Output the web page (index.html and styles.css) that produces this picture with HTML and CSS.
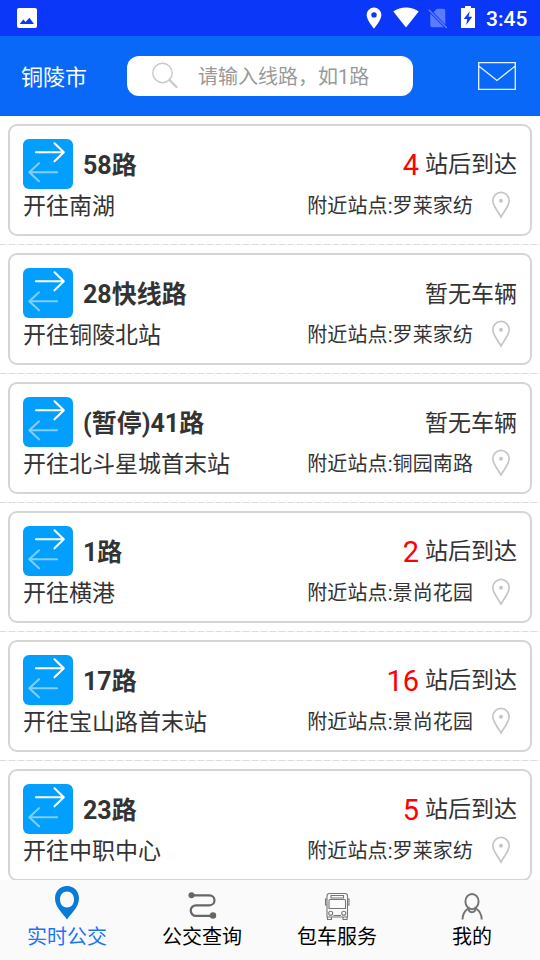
FILE: index.html
```html
<!DOCTYPE html>
<html lang="zh-CN">
<head>
<meta charset="utf-8">
<title>实时公交</title>
<link rel="stylesheet" href="styles.css">
</head>
<body>
<svg width="0" height="0" class="defs">
  <symbol id="swap" viewBox="0 0 50 50">
    <g fill="none" stroke-width="2.1" stroke-linecap="round" stroke-linejoin="round">
      <path stroke="#fff" d="M13 13.3H40.5M31.5 4.3L40.8 13.3L31.5 22.3"/>
      <path stroke="#80cfff" d="M34 33.3H6.5M16 24.3L6.3 33.3L16 42.3"/>
    </g>
  </symbol>
  <symbol id="pin" viewBox="0 0 20 28">
    <path fill="none" stroke="#c6c6c6" stroke-width="1.7" d="M10 26C7 20.5 1.8 15 1.8 9.6A8.2 8.2 0 0 1 18.2 9.6C18.2 15 13 20.5 10 26Z"/>
    <circle cx="10" cy="9.8" r="2" fill="#c6c6c6"/>
  </symbol>
</svg>
<div class="app">
  <div class="status">
    <svg width="20" height="20" viewBox="0 0 20 20"><rect width="20" height="20" rx="2" fill="#fff"/><path fill="#0a37f8" d="M2.7 16L6.3 11.5L8.6 14L12.4 9.8L17 16Z"/></svg>
    <div class="status-right">
      <svg class="s-pin" width="16" height="22" viewBox="0 0 16 22"><path fill="#fff" fill-rule="evenodd" d="M8 .6A7.4 7.4 0 0 0 .6 8C.6 13 8 21.6 8 21.6S15.400 13 15.400 8A7.400 7.400 0 0 0 8 .6ZM8 5.200A2.700 2.700 0 1 1 8 10.600A2.700 2.700 0 0 1 8 5.200Z"/></svg>
      <svg class="s-wifi" width="26" height="21" viewBox="0 0 26 21"><path fill="#fff" d="M13 20.500L.3 4.600C7.500-1 18.500-1 25.700 4.600Z"/></svg>
      <svg class="s-sim" width="20" height="21" viewBox="0 0 20 21"><path fill="#5c7cff" d="M9 .8H15.500Q17.300.8 17.300 2.600V16.500L5.500 4.300ZM2.300 5.500L15.800 19.300H4Q2.300 19.300 2.300 17.500Z"/><path stroke="#5c7cff" stroke-width="1.500" d="M.8 1.800L18.800 20"/></svg>
      <svg class="s-bat" width="14" height="22" viewBox="0 0 14 22"><path fill="#fff" d="M4 0H10V2H14V22H0V2H4Z"/><path fill="#0a37f8" d="M8.800 5L2.800 13H6.300L5.200 19L11.200 10.800H7.500Z"/></svg>
      <span class="clock">3:45</span>
    </div>
  </div>
  <header class="header">
    <span class="city">铜陵市</span>
    <div class="search">
      <svg width="28" height="28" viewBox="0 0 28 28"><circle cx="11.500" cy="11" r="9.700" fill="none" stroke="#c9c9c9" stroke-width="1.400"/><path d="M18.500 18L25.500 25" stroke="#c9c9c9" stroke-width="2.300" stroke-linecap="round"/></svg>
      <span>请输入线路，如1路</span>
    </div>
    <svg class="mail" width="38" height="28" viewBox="0 0 38 28"><path fill="none" stroke="#e8f4ff" stroke-width="1.300" d="M.7.7H37.300V27.300H.7ZM.7 4L19 18.500L37.300 4"/></svg>
  </header>
  <main class="list">
    <section class="item"><article class="card">
      <div class="top"><svg class="badge"><use href="#swap"/></svg><h2>58路</h2><p class="eta"><b>4</b>站后到达</p></div>
      <div class="bottom"><span class="dest">开往南湖</span><span class="near">附近站点:罗莱家纺</span><svg class="pin"><use href="#pin"/></svg></div>
    </article></section>
    <section class="item"><article class="card">
      <div class="top"><svg class="badge"><use href="#swap"/></svg><h2>28快线路</h2><p class="eta none">暂无车辆</p></div>
      <div class="bottom"><span class="dest">开往铜陵北站</span><span class="near">附近站点:罗莱家纺</span><svg class="pin"><use href="#pin"/></svg></div>
    </article></section>
    <section class="item"><article class="card">
      <div class="top"><svg class="badge"><use href="#swap"/></svg><h2>(暂停)41路</h2><p class="eta none">暂无车辆</p></div>
      <div class="bottom"><span class="dest">开往北斗星城首末站</span><span class="near">附近站点:铜园南路</span><svg class="pin"><use href="#pin"/></svg></div>
    </article></section>
    <section class="item"><article class="card">
      <div class="top"><svg class="badge"><use href="#swap"/></svg><h2>1路</h2><p class="eta"><b>2</b>站后到达</p></div>
      <div class="bottom"><span class="dest">开往横港</span><span class="near">附近站点:景尚花园</span><svg class="pin"><use href="#pin"/></svg></div>
    </article></section>
    <section class="item"><article class="card">
      <div class="top"><svg class="badge"><use href="#swap"/></svg><h2>17路</h2><p class="eta"><b>16</b>站后到达</p></div>
      <div class="bottom"><span class="dest">开往宝山路首末站</span><span class="near">附近站点:景尚花园</span><svg class="pin"><use href="#pin"/></svg></div>
    </article></section>
    <section class="item"><article class="card">
      <div class="top"><svg class="badge"><use href="#swap"/></svg><h2>23路</h2><p class="eta"><b>5</b>站后到达</p></div>
      <div class="bottom"><span class="dest">开往中职中心</span><span class="near">附近站点:罗莱家纺</span><svg class="pin"><use href="#pin"/></svg></div>
    </article></section>
  </main>
  <nav class="tabs">
    <div class="tab active">
      <svg width="36" height="36" viewBox="0 0 36 36"><path fill="#087bd8" fill-rule="evenodd" d="M18 1C11 1 6 6 6 13.500C6 22 13.500 28 18 34.500C22.500 28 30 22 30 13.500C30 6 25 1 18 1ZM18 6.500C22 6.500 25 9.500 25 14.500S22 22.500 18 22.500S11 19.500 11 14.500S14 6.500 18 6.500Z"/></svg>
      <span>实时公交</span>
    </div>
    <div class="tab">
      <svg width="36" height="36" viewBox="0 0 36 36"><path fill="none" stroke="#666" stroke-width="2.200" d="M7 10.300H25.500A5 5 0 0 1 25.500 20.300H12A5.300 5.300 0 0 0 12 30.900H28"/><circle cx="7.500" cy="10.300" r="3" fill="#666"/><circle cx="29" cy="30.500" r="3.200" fill="#666"/></svg>
      <span>公交查询</span>
    </div>
    <div class="tab">
      <svg width="36" height="36" viewBox="0 0 36 36"><g fill="none" stroke="#777" stroke-width="1.100"><path d="M8 32V11Q8 8.500 10.500 8.500H26Q28.500 8.500 28.500 11V32H8ZM12 10.500H24.500V13H12ZM11 14.500H25.500Q26.500 14.500 26.500 16V23.500H10V16Q10 14.500 11 14.500ZM8 14H6.500V20H8M28.500 14H30V20H28.500M8.500 32V34.500H12.500V32M24 32V34.500H28V32M14.500 30.500H22"/><circle cx="11.700" cy="28.300" r="2"/><circle cx="24.800" cy="28.300" r="2"/></g></svg>
      <span>包车服务</span>
    </div>
    <div class="tab">
      <svg width="36" height="36" viewBox="0 0 36 36"><g fill="none" stroke="#737373" stroke-width="1.900"><ellipse cx="18" cy="16.600" rx="6.600" ry="7.600"/><path d="M8.500 34.500C8.500 28.500 11 25.500 14.500 23.200C14.500 28.500 21.500 28.500 21.500 23.200C25.500 25.500 27.700 28.500 27.700 34.500"/></g></svg>
      <span>我的</span>
    </div>
  </nav>
</div>
</body>
</html>
```
FILE: styles.css
```css
* { box-sizing: border-box; }
body { margin: 0; background: #fff; color: #333; font-family: Roboto, "Noto Sans CJK SC", sans-serif; }
.defs { position: absolute; }
.app { display: flex; flex-direction: column; width: 540px; height: 960px; overflow: hidden; }
.status { flex: none; height: 36px; padding: 0 12px 0 17px; display: flex; align-items: center; justify-content: space-between; background: #0a37f8; }
.status-right { display: flex; align-items: center; }
.s-wifi { margin-left: 11px; margin-top: -2px; }
.s-sim { margin-left: 9px; }
.s-bat { margin-left: 13px; margin-top: -3px; }
.clock { width: 42px; margin-left: 11px; color: #fff; font-size: 21px; font-weight: 500; line-height: 36px; padding-top: 1px; white-space: nowrap; }
.header { flex: none; height: 80px; display: flex; align-items: center; padding: 0 24px 0 21px; background: #0a68f8; }
.city { width: 106px; padding-top: 3px; color: #fff; font-size: 22px; line-height: 30px; }
.search { width: 286px; height: 40px; display: flex; align-items: center; padding-left: 24px; gap: 19px; border-radius: 12px; background: #fff; color: #999; font-size: 20px; line-height: 30px; }
.search span { padding-top: 2px; }
.mail { margin-left: auto; }
.list { flex: 1; min-height: 0; overflow: hidden; }
.item { height: 129px; padding: 8px; background: repeating-linear-gradient(90deg, #dcdcdc 0 6px, #f2f2f2 6px 9px) left bottom / 100% 1px no-repeat; }
.card { height: 112px; padding: 13px; border: 2px solid #d5d5d5; border-radius: 9px; }
.top { display: flex; height: 50px; }
.badge { width: 50px; height: 50px; border-radius: 6px; background: #039fff; }
h2 { margin: 0 0 0 10px; font-size: 25px; font-weight: 700; line-height: 54px; }
.eta { display: flex; align-items: flex-start; margin: 0 0 0 auto; font-size: 23px; line-height: 52px; }
.eta b { margin-right: 6px; color: #f00; font-size: 29px; font-weight: 400; }
.eta.none { line-height: 54px; }
.bottom { display: flex; align-items: center; height: 32px; }
.dest { padding-top: 4px; font-size: 23px; line-height: 32px; }
.near { margin-left: auto; padding-top: 2px; font-size: 20px; line-height: 32px; letter-spacing: 0.1px; }
.pin { width: 20px; height: 28px; margin: 0 6px 0 18px; }
.tabs { flex: none; height: 80px; display: flex; background: #fafafa; }
.tab { flex: 1; display: flex; flex-direction: column; align-items: center; padding-top: 5px; color: #000; font-size: 20px; }
.tab svg { margin-right: 1px; }
.tab span { padding-top: 1px; margin-right: 1px; line-height: 30px; }
.tab.active { color: #1a73f8; }
```
